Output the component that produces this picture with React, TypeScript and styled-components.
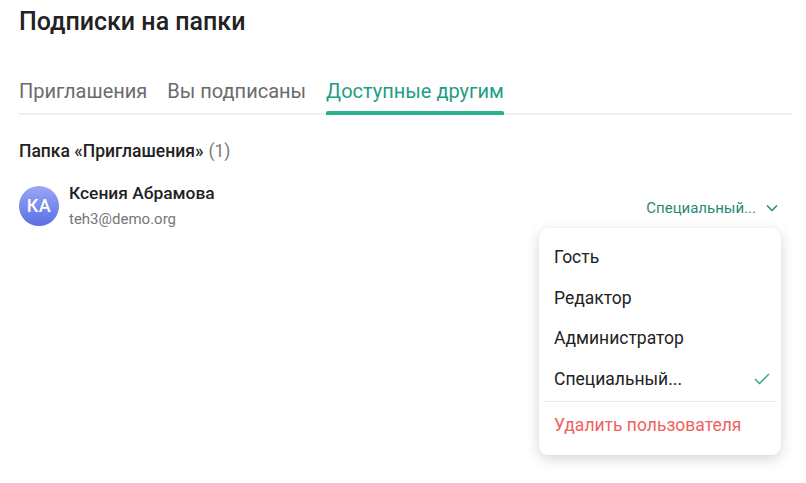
import React from "react";
import styled, { createGlobalStyle } from "styled-components";

const GlobalStyle = createGlobalStyle`
  body {
    margin: 0;
    background: #ffffff;
    font-family: Roboto, "Noto Sans", Arial, sans-serif;
    color: #222222;
  }
`;

const Page = styled.div`
  position: relative;
  width: 806px;
  height: 483px;
  padding: 7px 14px 0 19px;
  box-sizing: border-box;
`;

const Title = styled.h1`
  margin: 0;
  font-size: 25px;
  font-weight: 500;
  line-height: 30px;
  color: #222222;
`;

const Tabs = styled.div`
  display: flex;
  gap: 20px;
  margin-top: 42px;
  border-bottom: 2px solid #efefef;
`;

const Tab = styled.div<{ $active?: boolean }>`
  position: relative;
  font-size: 20px;
  line-height: 24px;
  padding-bottom: 10px;
  color: ${(p) => (p.$active ? "#1f9e86" : "#6b6b6b")};

  &::after {
    content: "";
    display: ${(p) => (p.$active ? "block" : "none")};
    position: absolute;
    left: 0;
    right: 0;
    bottom: -2px;
    height: 4px;
    border-radius: 2px 2px 0 0;
    background: #2bb08f;
  }
`;

const Section = styled.div`
  margin-top: 25px;
  font-size: 17.5px;
  font-weight: 500;
  line-height: 22px;
  color: #222222;
`;

const Count = styled.span`
  font-weight: 400;
  color: #7a7a7a;
  margin-left: 5px;
`;

const UserRow = styled.div`
  display: flex;
  align-items: center;
  margin-top: 20px;
`;

const Avatar = styled.div`
  width: 40px;
  height: 40px;
  border-radius: 50%;
  background: linear-gradient(180deg, #9aa6f8 0%, #5b6fe3 100%);
  color: #ffffff;
  font-size: 18px;
  font-weight: 500;
  display: flex;
  align-items: center;
  justify-content: center;
  letter-spacing: 0.5px;
`;

const UserInfo = styled.div`
  margin-left: 10px;
  display: flex;
  flex-direction: column;
  flex: 1;
`;

const Name = styled.div`
  font-size: 17.4px;
  font-weight: 500;
  line-height: 22px;
  color: #222222;
`;

const Email = styled.div`
  font-size: 15px;
  line-height: 20px;
  margin-top: 5px;
  color: #767676;
`;

const RoleButton = styled.div`
  display: flex;
  align-items: center;
  gap: 10px;
  font-size: 15px;
  color: #1f8a74;
  margin-right: 14px;
  margin-top: 4px;
`;

const Menu = styled.div`
  position: absolute;
  left: 539px;
  top: 228px;
  width: 242px;
  padding: 9px 0 9px;
  box-sizing: border-box;
  background: #ffffff;
  border-radius: 9px;
  box-shadow: 0 4px 14px rgba(0, 0, 0, 0.16), 0 0 2px rgba(0, 0, 0, 0.06);
`;

const MenuItem = styled.div<{ $danger?: boolean }>`
  display: flex;
  align-items: center;
  justify-content: space-between;
  height: 40.5px;
  padding: 0 11px 0 15px;
  font-size: 17.5px;
  color: ${(p) => (p.$danger ? "#f0615c" : "#222222")};
`;

const MenuDivider = styled.div`
  height: 1px;
  margin: 2px 4px 3px 4px;
  background: #e9e9e9;
`;

const Chevron = () => (
  <svg width="12" height="8" viewBox="0 0 12 8">
    <path d="M1 1.5l5 5 5-5" fill="none" stroke="#1f8a74" strokeWidth="1.5" />
  </svg>
);

const Check = () => (
  <svg width="16" height="12" viewBox="0 0 16 12">
    <path d="M1 6l4.5 4.5L15 1" fill="none" stroke="#2aa586" strokeWidth="1.4" />
  </svg>
);

const roles = ["Гость", "Редактор", "Администратор", "Специальный..."];

const App: React.FC = () => {
  return (
    <Page>
      <GlobalStyle />
      <Title>Подписки на папки</Title>
      <Tabs>
        <Tab>Приглашения</Tab>
        <Tab>Вы подписаны</Tab>
        <Tab $active>Доступные другим</Tab>
      </Tabs>
      <Section>
        Папка «Приглашения»<Count>(1)</Count>
      </Section>
      <UserRow>
        <Avatar>КА</Avatar>
        <UserInfo>
          <Name>Ксения Абрамова</Name>
          <Email>teh3@demo.org</Email>
        </UserInfo>
        <RoleButton>
          Специальный...
          <Chevron />
        </RoleButton>
      </UserRow>
      <Menu>
        {roles.map((role) => (
          <MenuItem key={role}>
            {role}
            {role === "Специальный..." && <Check />}
          </MenuItem>
        ))}
        <MenuDivider />
        <MenuItem $danger>Удалить пользователя</MenuItem>
      </Menu>
    </Page>
  );
};

export default App;
